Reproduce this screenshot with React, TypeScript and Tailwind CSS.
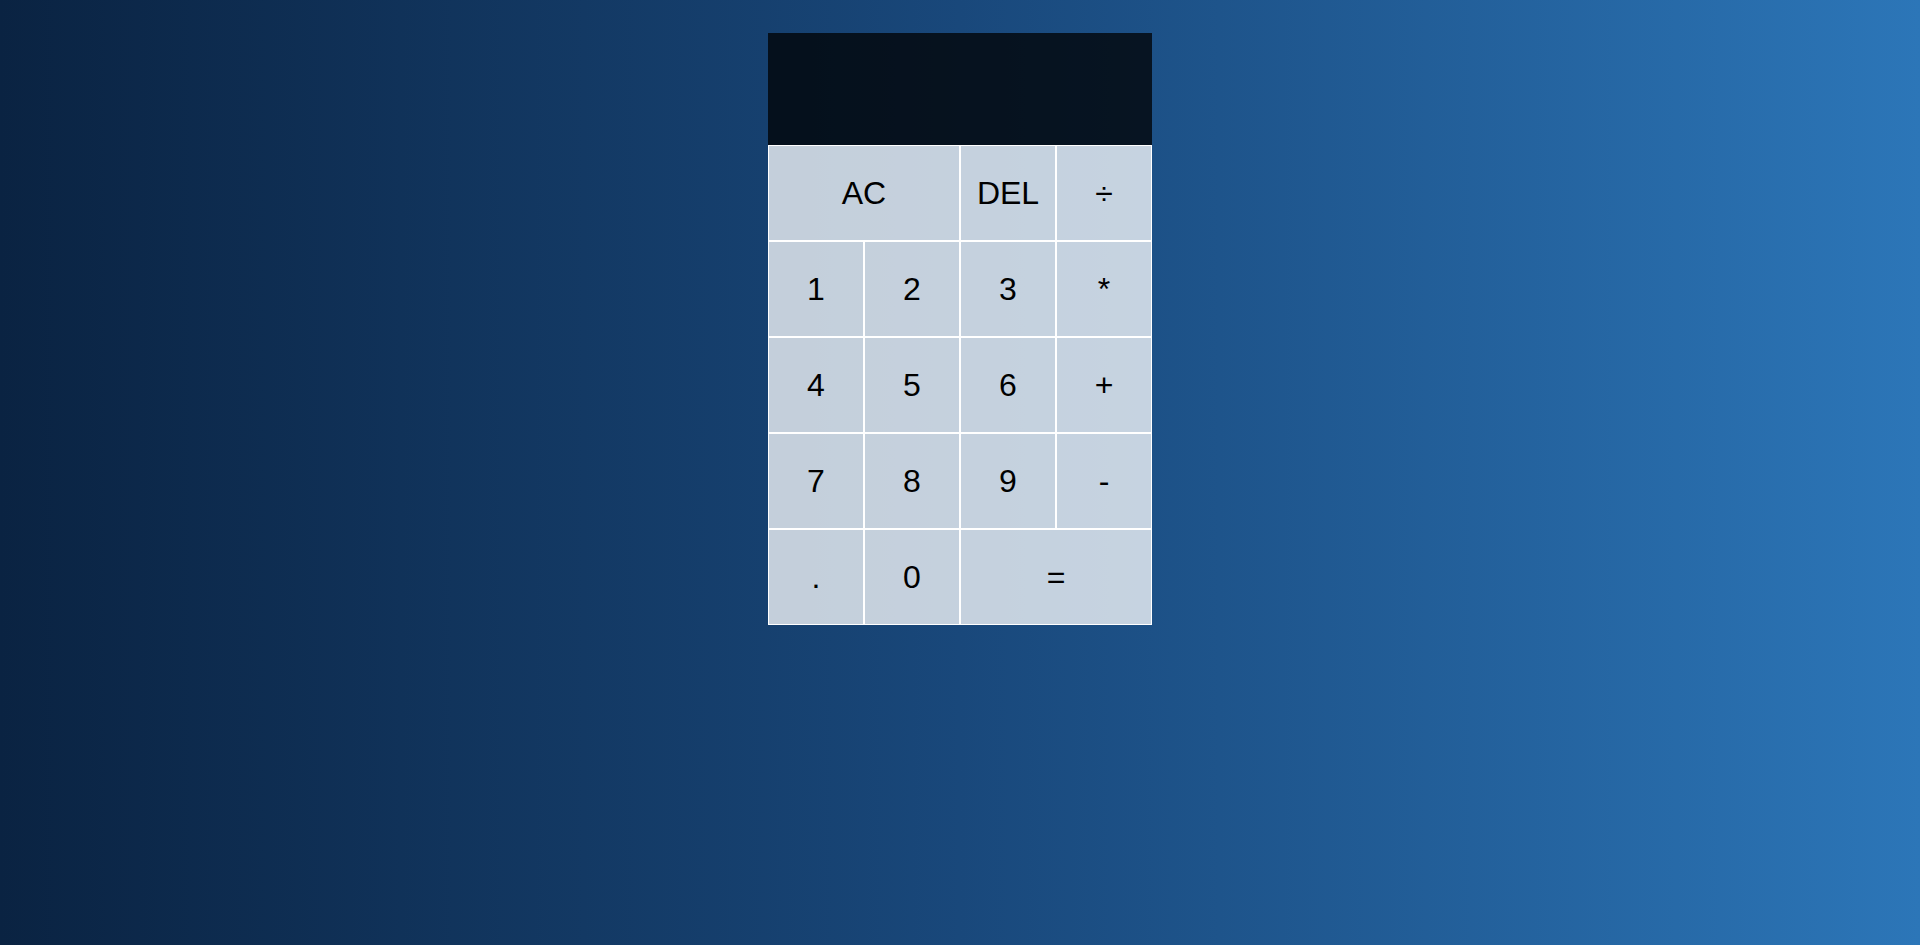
const keys = [
  { label: "AC", wide: true },
  { label: "DEL" },
  { label: "÷" },
  { label: "1" },
  { label: "2" },
  { label: "3" },
  { label: "*" },
  { label: "4" },
  { label: "5" },
  { label: "6" },
  { label: "+" },
  { label: "7" },
  { label: "8" },
  { label: "9" },
  { label: "-" },
  { label: "." },
  { label: "0" },
  { label: "=", wide: true },
];

export default function App() {
  return (
    <div className="min-h-screen w-full bg-gradient-to-r from-[#0a2342] via-[#19487b] to-[#2c76b8] pt-[33px] font-['Liberation_Sans',Arial,sans-serif]">
      <div className="mx-auto grid w-[384px] grid-cols-[repeat(4,96px)] grid-rows-[112px_repeat(5,96px)]">
        <div className="col-span-4 flex flex-col items-end justify-around break-all bg-black/75 p-2.5 text-white">
          <div className="text-2xl text-white/75"></div>
          <div className="text-4xl"></div>
        </div>
        {keys.map((k) => (
          <button
            key={k.label}
            className={`${k.wide ? "col-span-2" : ""} cursor-pointer border border-white bg-white/75 text-[32px] text-black outline-none hover:bg-white/90`}
          >
            {k.label}
          </button>
        ))}
      </div>
    </div>
  );
}
